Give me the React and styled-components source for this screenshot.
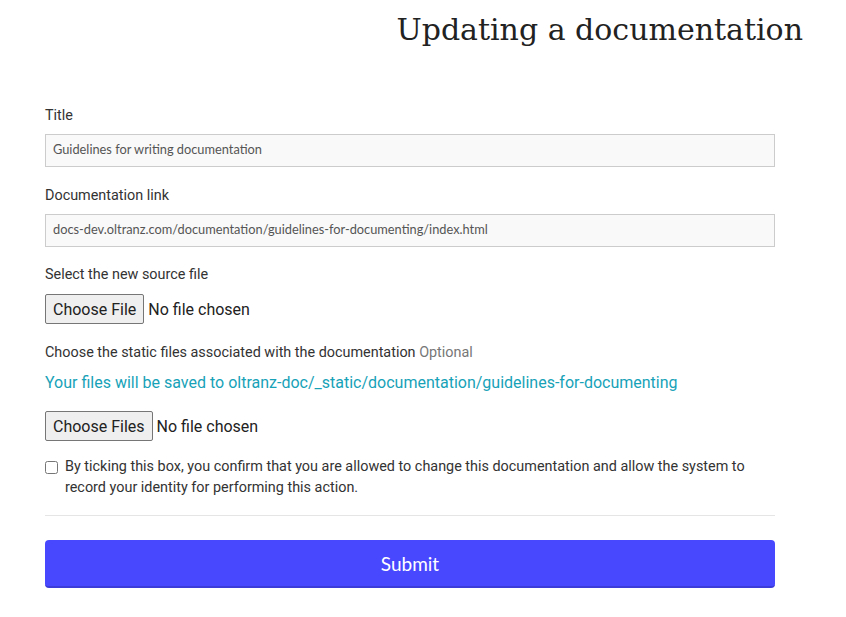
import React from 'react'
import styled, { createGlobalStyle } from 'styled-components'

const GlobalStyle = createGlobalStyle`
  body {
    margin: 0;
    background: #fff;
    font-family: Roboto, "Liberation Sans", sans-serif;
    color: #333;
  }
`

const Page = styled.div`
  width: 846px;
  min-height: 617px;
`

const Header = styled.h1`
  margin: 0;
  padding: 9px 43px 0 0;
  text-align: right;
  font-family: "DejaVu Serif", "Liberation Serif", serif;
  font-weight: 400;
  font-size: 30px;
  line-height: 42px;
  color: #222;
`

const Form = styled.form`
  width: 730px;
  margin: 54px 0 0 45px;
  display: flex;
  flex-direction: column;
`

const Group = styled.div`
  display: flex;
  flex-direction: column;
  margin-bottom: ${({ $gap }) => $gap || 18}px;
`

const Label = styled.label`
  font-size: 14.4px;
  line-height: 21px;
  color: #333;
  margin-bottom: ${({ $gap }) => $gap || 8}px;
`

const Optional = styled.span`
  color: #777;
`

const TextInput = styled.input`
  box-sizing: border-box;
  height: 33px;
  width: 100%;
  margin: 0;
  padding: 0 7px 3px;
  border: 1px solid #ccc;
  border-radius: 0;
  background: #f9f9f9;
  font-family: Lato, "Open Sans", sans-serif;
  font-size: 12.8px;
  color: #555;
  outline: none;
`

const FileInput = styled.input`
  font-family: Roboto, "Liberation Sans", sans-serif;
  font-size: 16px;
  color: #222;
  height: 30px;
  margin: 0;

  &::file-selector-button {
    font-family: Roboto, "Liberation Sans", sans-serif;
    font-size: 16px;
    height: 30px;
    padding: 0 7px;
    margin-right: 4px;
    border: 1px solid #767676;
    border-radius: 2px;
    background: #efefef;
    color: #222;
  }
`

const Info = styled.p`
  margin: 0 0 16px;
  font-size: 16px;
  line-height: 24px;
  color: #17a2b8;
`

const CheckRow = styled.label`
  display: flex;
  align-items: flex-start;
  gap: 7px;
  font-size: 14.4px;
  line-height: 21px;
  color: #333;
`

const Checkbox = styled.input`
  margin: 5px 0 0;
  width: 13px;
  height: 13px;
  flex-shrink: 0;
`

const Divider = styled.hr`
  width: 100%;
  margin: 17px 0 24px;
  border: 0;
  border-top: 1px solid #e5e5e5;
`

const Submit = styled.button`
  height: 48px;
  width: 100%;
  border: 0;
  border-bottom: 2px solid #3c3cd8;
  border-radius: 4px;
  background: #4848ff;
  color: #fff;
  font-family: Lato, "Open Sans", sans-serif;
  font-size: 19px;
  cursor: pointer;
`

const App = () => {
  return (
    <Page>
      <GlobalStyle />
      <Header>Updating a documentation</Header>
      <Form onSubmit={(e) => e.preventDefault()}>
        <Group>
          <Label>Title</Label>
          <TextInput type="text" defaultValue="Guidelines for writing documentation" />
        </Group>
        <Group $gap={17}>
          <Label>Documentation link</Label>
          <TextInput
            type="text"
            defaultValue="docs-dev.oltranz.com/documentation/guidelines-for-documenting/index.html"
          />
        </Group>
        <Group $gap={18}>
          <Label $gap={9}>Select the new source file</Label>
          <FileInput type="file" />
        </Group>
        <Label $gap={8}>
          Choose the static files associated with the documentation <Optional>Optional</Optional>
        </Label>
        <Info>Your files will be saved to oltranz-doc/_static/documentation/guidelines-for-documenting</Info>
        <Group $gap={15}>
          <FileInput type="file" multiple />
        </Group>
        <CheckRow>
          <Checkbox type="checkbox" />
          <span>
            By ticking this box, you confirm that you are allowed to change this documentation and allow the system to
            record your identity for performing this action.
          </span>
        </CheckRow>
        <Divider />
        <Submit type="submit">Submit</Submit>
      </Form>
    </Page>
  )
}

export default App
